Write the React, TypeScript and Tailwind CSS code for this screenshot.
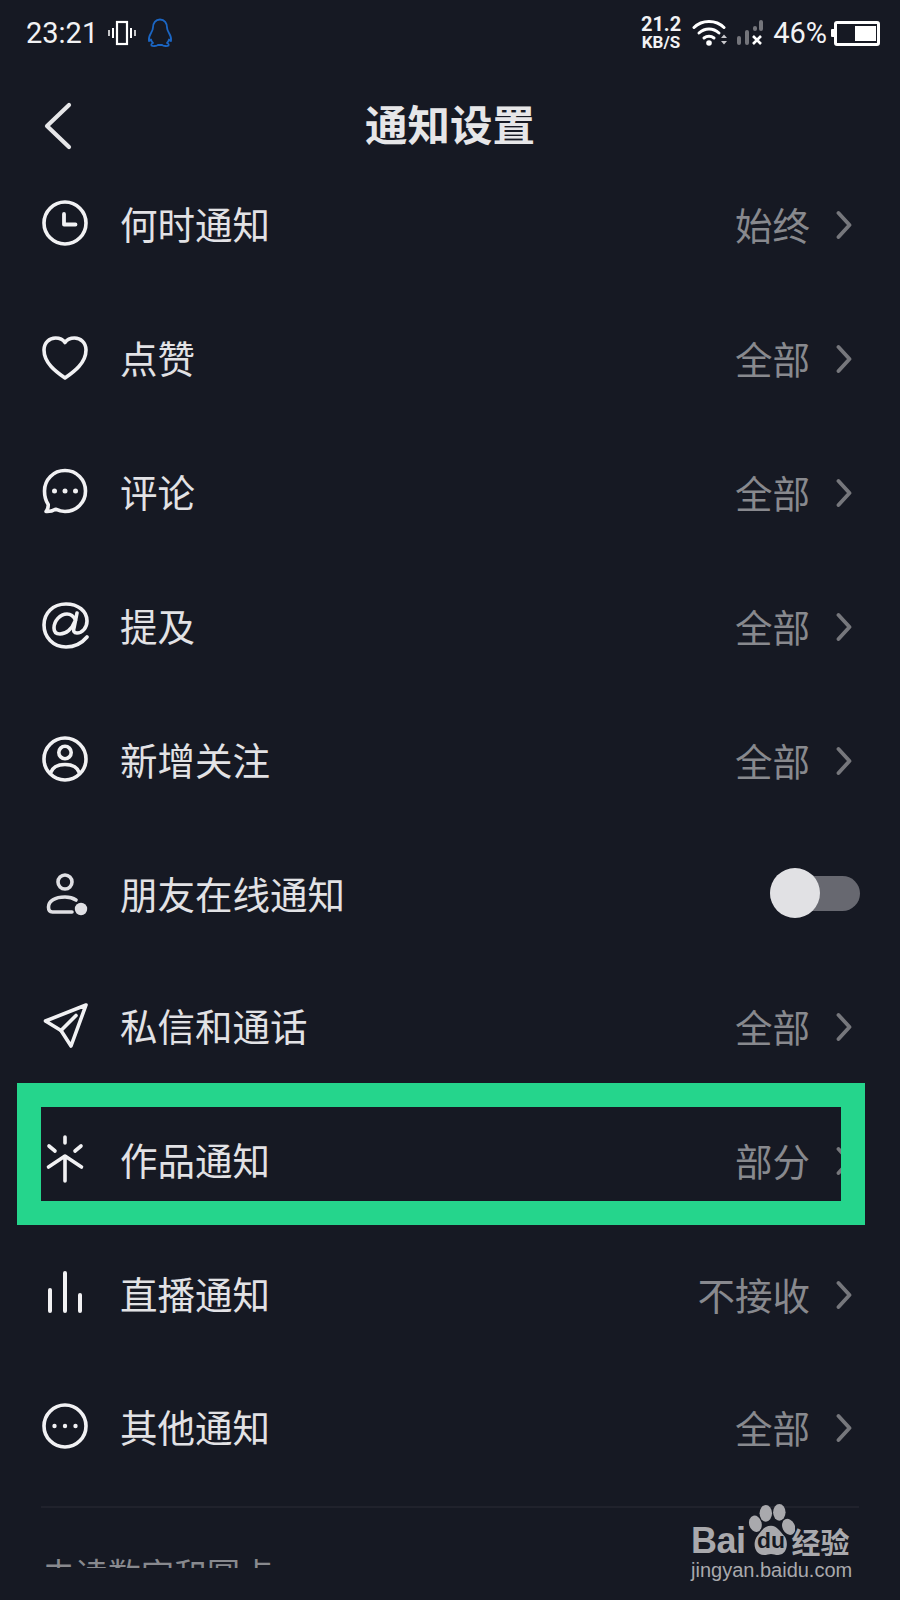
import React from "react";

const CJK = "font-['Noto_Sans_CJK_SC','Noto_Sans',sans-serif]";

const icon = {
  fill: "none",
  stroke: "#f1f1f3",
  strokeWidth: 3.6,
  strokeLinecap: "round" as const,
  strokeLinejoin: "round" as const,
};

// all row icons share a 48 box, row centre at 24,24
const ClockIcon = () => (
  <svg width="48" height="48" viewBox="0 0 48 48" {...icon}>
    <circle cx="24" cy="24" r="21" />
    <path d="M23 15v10.500h11.500" strokeWidth="3.800" />
  </svg>
);

const HeartIcon = () => (
  <svg width="48" height="48" viewBox="0 0 48 48" {...icon}>
    <path d="M24 45C17 40 3 31 3 17 3 9.500 8.500 5 14.500 5c4 0 7.500 1.500 9.500 4.500C26 6.500 29.500 5 33.500 5 39.500 5 45 9.500 45 17 45 31 31 40 24 45Z" />
  </svg>
);

const CommentIcon = () => (
  <svg width="48" height="48" viewBox="0 0 48 48" {...icon}>
    <path d="M24 3.500c11.500 0 20.500 9 20.500 20.500S35.500 44.500 24 44.500c-3.500 0-6.500-.8-9.500-2.300-2.500 1.600-6 2.500-9.500 2.300 1.600-2 2.400-4.500 2.200-7C4.800 33.800 3.500 29 3.500 24 3.500 12.500 12.500 3.500 24 3.500Z" />
    <circle cx="13.500" cy="24" r="2.500" fill="#f1f1f3" stroke="none" />
    <circle cx="24" cy="24" r="2.500" fill="#f1f1f3" stroke="none" />
    <circle cx="34.500" cy="24" r="2.500" fill="#f1f1f3" stroke="none" />
  </svg>
);

const AtIcon = () => (
  <svg width="48" height="48" viewBox="0 0 48 48" {...icon}>
    <path d="M46 36C41 42 33 46 25 46 12 46 3 36 3 24 3 12 12 3 25 3 37 3 46 10 46 20 46 27 41 32 36 32 33 32 32 30 33 27L36 12" />
    <path d="M34.500 19C32.500 15 29.500 13 26 13 19 13 13 20 13 27 13 31 15 33 19 33 25 33 31 28 33.500 21" />
  </svg>
);

const PersonCircleIcon = () => (
  <svg width="48" height="48" viewBox="0 0 48 48" {...icon}>
    <circle cx="24" cy="24" r="21" />
    <circle cx="24" cy="17.500" r="6.200" />
    <path d="M9.500 38c2-6 8-8.500 14.500-8.500S36.500 32 38.500 38" />
  </svg>
);

const FriendIcon = () => (
  <svg width="48" height="48" viewBox="0 0 48 48" {...icon} stroke="#e0e0e4">
    <circle cx="24" cy="13" r="7" />
    <path d="M35 31c-3-2-7-3-11-3C14 28 7.500 32 7.500 38c0 3.500 1.500 5 4 5H31" />
    <circle cx="40" cy="40" r="6.200" fill="#e0e0e4" stroke="none" />
  </svg>
);

const PlaneIcon = () => (
  <svg width="48" height="48" viewBox="0 0 48 48" {...icon}>
    <path d="M45 4 4.500 20 20 29.500 30 45 45 4Z" />
    <path d="M20 29.500 35 14.500" />
  </svg>
);

const SparkUpIcon = () => (
  <svg width="48" height="48" viewBox="0 0 48 48" {...icon}>
    <path d="M24 2v6M8 11l6 5M40 11l-6 5M24 22v24M7.500 32 24 21l16.500 11" />
  </svg>
);

const BarsIcon = () => (
  <svg width="48" height="48" viewBox="0 0 48 48" {...icon} strokeWidth="4">
    <path d="M9 21v21M24 4v38M39 26v16" />
  </svg>
);

const MoreIcon = () => (
  <svg width="48" height="48" viewBox="0 0 48 48" {...icon}>
    <circle cx="24" cy="24" r="21" />
    <circle cx="13.500" cy="24" r="2.200" fill="#f1f1f3" stroke="none" />
    <circle cx="24" cy="24" r="2.200" fill="#f1f1f3" stroke="none" />
    <circle cx="34.500" cy="24" r="2.200" fill="#f1f1f3" stroke="none" />
  </svg>
);

const Chevron = () => (
  <svg width="18" height="30" viewBox="0 0 18 30" fill="none" stroke="#76777c" strokeWidth="3.800" strokeLinecap="round" strokeLinejoin="round">
    <path d="M4.500 3 15.500 15 4.500 27" />
  </svg>
);

const rows = [
  { label: "何时通知", value: "始终", Icon: ClockIcon },
  { label: "点赞", value: "全部", Icon: HeartIcon },
  { label: "评论", value: "全部", Icon: CommentIcon },
  { label: "提及", value: "全部", Icon: AtIcon },
  { label: "新增关注", value: "全部", Icon: PersonCircleIcon },
  { label: "朋友在线通知", toggle: true, Icon: FriendIcon, cls: "mb-[-2px]" },
  { label: "私信和通话", value: "全部", Icon: PlaneIcon },
  { label: "作品通知", value: "部分", Icon: SparkUpIcon },
  { label: "直播通知", value: "不接收", Icon: BarsIcon, cls: "mb-[-1px]" },
  { label: "其他通知", value: "全部", Icon: MoreIcon },
];

function StatusBar() {
  return (
    <div className="h-[66px] flex items-center justify-between pl-[26px] pr-[20px] text-white font-['Roboto',sans-serif]">
      <div className="flex items-center">
        <span className="text-[29px] leading-none text-[#f2f2f4]">23:21</span>
        <svg className="ml-[10px]" width="28" height="26" viewBox="0 0 28 26" fill="none" stroke="#fff">
          <rect x="9" y="2" width="10" height="22" strokeWidth="2.200" />
          <path d="M5 8v10M23 8v10" strokeWidth="2" />
          <path d="M1 10v6M27 10v6" strokeWidth="1.500" />
        </svg>
        <svg className="ml-[11px]" width="26" height="30" viewBox="0 0 26 30" fill="none" stroke="#1b66c4" strokeWidth="1.800" strokeLinejoin="round">
          <path d="M13 1.500c-4.500 0-7 3.500-7 8 0 2-.6 3-2 5.500-1.500 2.500-2.500 5.500-2 8 .6 0 1.500-.8 2-1.500.4 1.500 1 2.500 2 3.500-1.500.6-2 1.500-1.500 2.500 1 .8 5 .8 6.500-.7.900.2 3 .2 4 0 1.500 1.500 5.500 1.500 6.500.7.500-1 0-1.900-1.500-2.500 1-1 1.600-2 2-3.500.5.700 1.400 1.500 2 1.500.5-2.500-.5-5.500-2-8-1.400-2.500-2-3.500-2-5.500 0-4.500-2.500-8-7-8Z" />
        </svg>
      </div>
      <div className="flex items-center">
        <div className="flex flex-col items-center font-bold text-[#f2f2f4]">
          <span className="text-[20px] leading-[18px]">21.2</span>
          <span className="text-[17px] leading-[18px]">KB/S</span>
        </div>
        <svg className="ml-[11px]" width="36" height="28" viewBox="0 0 36 28" fill="none" stroke="#fff" strokeWidth="3" strokeLinecap="round">
          <path d="M2 8.500C6 4.500 11 2.500 17 2.500s11 2 15 6" />
          <path d="M7 14c3-2.700 6-4 10-4s7 1.300 10 4" />
          <path d="M12 19c1.500-1.200 3-1.800 5-1.800s3.500.6 5 1.800" />
          <circle cx="17" cy="24" r="2.800" fill="#fff" stroke="none" />
          <path d="M29 19h6l-3-3.500ZM29 22h6l-3 3.500Z" fill="#c9c9cd" stroke="none" />
        </svg>
        <svg className="ml-[8px]" width="28" height="28" viewBox="0 0 28 28">
          <rect x="1" y="17" width="4" height="9" rx="2" fill="#74757b" />
          <rect x="9" y="11" width="4" height="15" rx="2" fill="#74757b" />
          <rect x="17" y="7" width="4" height="5" rx="2" fill="#74757b" />
          <rect x="23" y="1" width="4" height="11" rx="2" fill="#74757b" />
          <path d="M17 17l8 8M25 17l-8 8" stroke="#fff" strokeWidth="2.600" />
        </svg>
        <span className="ml-[9px] text-[29px] leading-none text-[#f2f2f4]">46%</span>
        <div className="ml-[4px] flex items-center">
          <div className="w-[3px] h-[8px] bg-white rounded-l-[1px]" />
          <div className="w-[46px] h-[25px] border-[3px] border-white rounded-[3px] flex justify-end items-center pr-[1px]">
            <div className="w-[21px] h-[15px] bg-white" />
          </div>
        </div>
      </div>
    </div>
  );
}

function BaiduMark() {
  return (
    <div className="absolute left-[691px] top-[1504px] w-[165px] flex flex-col text-[#a9a9ad] font-['Liberation_Sans',sans-serif]">
      <div className="flex items-end h-[55px]">
        <span className="text-[36px] leading-[36px] font-bold tracking-[-0.5px]">Bai</span>
        <svg className="shrink-0 self-start ml-[1px]" width="48" height="52" viewBox="0 0 46 50">
          <g fill="#a9a9ad">
            <ellipse cx="18" cy="9" rx="6" ry="8" />
            <ellipse cx="31" cy="8" rx="6" ry="8" />
            <ellipse cx="8" cy="19" rx="6" ry="8" transform="rotate(-15 8 19)" />
            <ellipse cx="40" cy="22" rx="6" ry="8" transform="rotate(-25 40 22)" />
            <path d="M23 21c6 0 9 6 13 10 4 5 3 18-6 18-3 0-5-1-7-1s-4 1-7 1c-8 0-11-10-7-17 4-5 7-11 14-11Z" />
          </g>
          <text x="23" y="42" textAnchor="middle" fontSize="22" fontWeight="700" fill="#161923" fontFamily="Liberation Sans, sans-serif">du</text>
        </svg>
        <span className={`${CJK} ml-[-3px] text-[29px] leading-[36px] font-bold whitespace-nowrap`}>经验</span>
      </div>
      <span className="text-[20px] leading-[24px] mt-[-1px] whitespace-nowrap">jingyan.baidu.com</span>
    </div>
  );
}

export default function App() {
  return (
    <div className={`${CJK} relative w-[900px] h-[1600px] overflow-hidden bg-[#161923]`}>
      <StatusBar />

      <div className="h-[90px] pt-[24px] relative flex items-center justify-center">
        <svg className="absolute left-[42px] top-[35px]" width="32" height="50" viewBox="0 0 32 50" fill="none" stroke="#e6e6e8" strokeWidth="4.200" strokeLinecap="round" strokeLinejoin="round">
          <path d="M27 4 5 25l22 21" />
        </svg>
        <h1 className="text-[42.5px] leading-none font-bold text-[#e6e6e8]">通知设置</h1>
      </div>

      <div className="h-[1412px] overflow-hidden">
        {rows.map(({ label, value, toggle, Icon, cls }) => (
          <div key={label} className={`h-[134px] flex items-center pl-[41px] pr-[48px] ${cls ?? ""}`}>
            <div className="w-[48px] h-[48px] shrink-0">
              <Icon />
            </div>
            <span className="ml-[31px] text-[37.5px] leading-none text-[#e2e2e5]">{label}</span>
            {toggle ? (
              <div className="ml-auto mr-[-8px] relative w-[90px] h-[35px] rounded-full bg-[#676870]">
                <div className="absolute left-0 top-[-8px] w-[50px] h-[50px] rounded-full bg-[#e1e1e4]" />
              </div>
            ) : (
              <div className="ml-auto flex items-center">
                <span className="mt-[2px] text-[37.5px] leading-none text-[#88898e]">{value}</span>
                <div className="ml-[24px] mt-[3px]">
                  <Chevron />
                </div>
              </div>
            )}
          </div>
        ))}
        <div className="mx-[41px] mt-[13px] border-t-2 border-[#20222c]" />
        <p className="ml-[42px] mt-[49px] text-[33px] leading-none text-[#88898e]">未读数字和圆点</p>
      </div>

      {/* annotation drawn on top of the screenshot */}
      <div className="absolute left-[17px] top-[1083px] w-[848px] h-[142px] border-[24px] border-[#25d58c]" />

      <BaiduMark />
    </div>
  );
}
